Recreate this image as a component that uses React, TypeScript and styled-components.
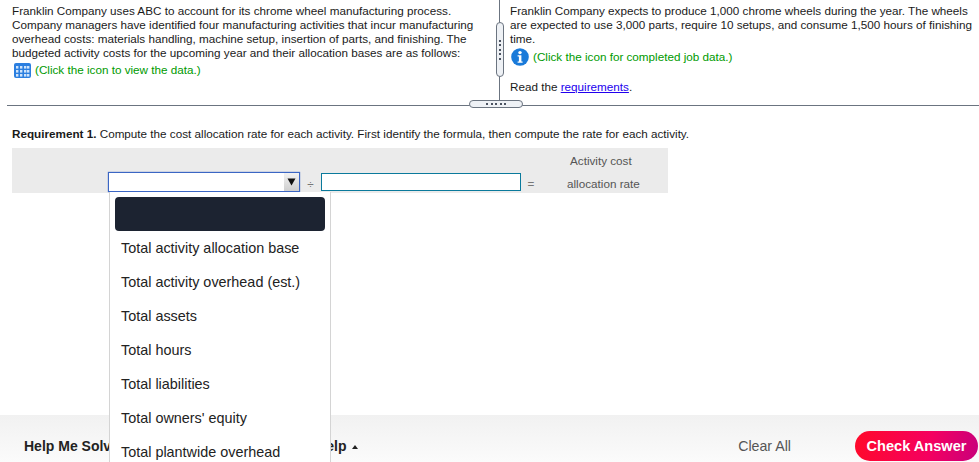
import React from "react";
import styled, { createGlobalStyle } from "styled-components";

const Global = createGlobalStyle`
  html, body { margin: 0; padding: 0; background: #fff; overflow: hidden; }
  body { font-family: "Liberation Sans", Arial, sans-serif; }
`;

const Page = styled.div`
  position: relative;
  width: 979px;
  height: 462px;
  overflow: hidden;
  display: flex;
  flex-direction: column;
  color: #1a1a1a;
  font-size: 11.7px;
  line-height: 14px;
`;

const TopPanes = styled.div`
  position: relative;
  display: flex;
  height: 105px;
  margin-left: 7px;
  border-bottom: 1px solid #6b7480;
  flex: none;
`;

const LeftPane = styled.div`
  width: 493px;
  flex: none;
  box-sizing: border-box;
  padding: 4px 0 0 5px;
  border-right: 1px solid #6b7480;
`;

const RightPane = styled.div`
  flex: 1;
  min-width: 0;
  padding: 4px 0 0 10px;
`;

const Para = styled.p`
  margin: 0;
  white-space: nowrap;
`;

const IconLine = styled.div<{ $top: number; $gap: number; $indent: number }>`
  display: flex;
  align-items: center;
  gap: ${(p) => p.$gap}px;
  margin-top: ${(p) => p.$top}px;
  margin-left: ${(p) => p.$indent}px;
  height: 18px;
  color: #009a00;
  white-space: nowrap;
`;

const ReadLine = styled.p`
  margin: 14px 0 0;
`;

const Link = styled.a`
  color: #2200ee;
  text-decoration: underline;
`;

const VHandle = styled.div`
  position: absolute;
  left: 489px;
  top: 22px;
  width: 6px;
  height: 53px;
  background: #eef1f5;
  border: 1px solid #6b7480;
  border-radius: 4px;
  display: flex;
  flex-direction: column;
  align-items: center;
  justify-content: center;
  gap: 2.5px;
`;

const HHandle = styled.div`
  position: absolute;
  left: 462px;
  top: 100px;
  width: 52px;
  height: 6px;
  background: #eef1f5;
  border: 1px solid #6b7480;
  border-radius: 4px;
  display: flex;
  align-items: center;
  justify-content: center;
  gap: 2.5px;
`;

const Dot = styled.span`
  width: 2px;
  height: 2px;
  background: #4a5260;
`;

const Requirement = styled.p`
  margin: 21px 0 0 12px;
  white-space: nowrap;
`;

const Band = styled.div`
  margin: 7px 0 0 12px;
  width: 656px;
  height: 45px;
  background: #ebebeb;
  display: flex;
  flex-direction: column;
  color: #555;
`;

const BandTop = styled.div`
  height: 24px;
  padding: 6px 0 0 558px;
  box-sizing: border-box;
`;

const Formula = styled.div`
  display: flex;
  align-items: center;
  height: 20px;
  padding-left: 96px;
`;

const SelectBox = styled.div`
  width: 190px;
  height: 18px;
  background: #fff;
  border: 1px solid #3b66c4;
  box-shadow: 0 0 1px #3b66c4;
  display: flex;
  justify-content: flex-end;
  flex: none;
`;

const Arrow = styled.div`
  width: 15px;
  background: linear-gradient(#f2f2f2, #cfcfcf);
  display: flex;
  align-items: center;
  justify-content: center;
`;

const Op = styled.span<{ $w: number }>`
  width: ${(p) => p.$w}px;
  padding-top: 4px;
  text-align: center;
  color: #777;
  flex: none;
`;

const TextBox = styled.div`
  width: 198px;
  height: 16px;
  background: #fff;
  border: 1px solid #0a7a9c;
  flex: none;
`;

const Result = styled.span`
  margin-left: 26px;
  padding-top: 4px;
  white-space: nowrap;
`;

const Spacer = styled.div`
  flex: 1;
`;

const Footer = styled.div`
  flex: none;
  height: 47px;
  box-sizing: border-box;
  background: linear-gradient(#f1f1f1, #fbfbfb);
  display: flex;
  align-items: center;
  padding: 15px 1px 0 24px;
  font-size: 14px;
  line-height: 16px;
`;

const FooterLinks = styled.div`
  display: flex;
  gap: 100px;
  align-items: center;
  font-weight: 700;
  color: #222;
  white-space: nowrap;
`;

const Caret = styled.span`
  display: inline-block;
  margin-left: 5px;
  vertical-align: middle;
  border-left: 3.5px solid transparent;
  border-right: 3.5px solid transparent;
  border-bottom: 4px solid #222;
`;

const ClearAll = styled.span`
  margin-left: auto;
  margin-right: 64px;
  color: #555;
  font-size: 14.2px;
`;

const CheckButton = styled.button`
  width: 123px;
  height: 30px;
  border: 0;
  padding: 0;
  border-radius: 15px;
  background: linear-gradient(100deg, #ff0a2a 0%, #f5005f 60%, #c8007c 100%);
  color: #fff;
  font: 700 14.6px/16px "Liberation Sans", Arial, sans-serif;
`;

const Menu = styled.div`
  position: absolute;
  left: 109px;
  top: 192px;
  width: 210px;
  height: 280px;
  background: #fff;
  border: 1px solid #d4d4d4;
  border-top: 0;
  padding: 5px 5px 0;
`;

const MenuHighlight = styled.div`
  width: 210px;
  height: 34px;
  border-radius: 4px;
  background: #1c2331;
`;

const MenuItem = styled.div`
  height: 34px;
  padding-left: 6px;
  display: flex;
  align-items: center;
  font-size: 14.4px;
  color: #222;
  white-space: nowrap;
`;

const items = [
  "Total activity allocation base",
  "Total activity overhead (est.)",
  "Total assets",
  "Total hours",
  "Total liabilities",
  "Total owners' equity",
  "Total plantwide overhead",
];

const GridIcon = () => (
  <svg width="17" height="15" viewBox="0 0 17 15">
    <rect x="0" y="0" width="17" height="15" rx="2" fill="#2b7fe0" />
    <g fill="#cfe4fb">
      {[3, 7, 11].map((y) =>
        [2, 6, 10, 13].map((x) => <rect key={`${x}-${y}`} x={x} y={y} width="2.4" height="2.6" />)
      )}
    </g>
  </svg>
);

const InfoIcon = () => (
  <svg width="18" height="18" viewBox="0 0 18 18">
    <circle cx="9" cy="9" r="8.8" fill="#1a7ad9" />
    <circle cx="9" cy="4.6" r="1.7" fill="#fff" />
    <path d="M6.6 7.2h3.8v6.2h1.2v1.4H6.6v-1.4h1.3V8.6H6.6z" fill="#fff" />
  </svg>
);

const ArrowGlyph = () => (
  <svg width="9" height="8" viewBox="0 0 9 8">
    <path d="M0.5 0.5h8L4.5 7.5z" fill="#111" />
  </svg>
);

export default function App() {
  return (
    <Page>
      <Global />
      <TopPanes>
        <LeftPane>
          <Para>Franklin Company uses ABC to account for its chrome wheel manufacturing process.</Para>
          <Para>Company managers have identified four manufacturing activities that incur manufacturing</Para>
          <Para>overhead costs: materials handling, machine setup, insertion of parts, and finishing. The</Para>
          <Para>budgeted activity costs for the upcoming year and their allocation bases are as follows:</Para>
          <IconLine $top={1} $gap={4} $indent={2}>
            <GridIcon />
            (Click the icon to view the data.)
          </IconLine>
        </LeftPane>
        <RightPane>
          <Para>Franklin Company expects to produce 1,000 chrome wheels during the year. The wheels</Para>
          <Para>are expected to use 3,000 parts, require 10 setups, and consume 1,500 hours of finishing</Para>
          <Para>time.</Para>
          <IconLine $top={2} $gap={4} $indent={1}>
            <InfoIcon />
            (Click the icon for completed job data.)
          </IconLine>
          <ReadLine>
            Read the <Link href="#">requirements</Link>.
          </ReadLine>
        </RightPane>
        <VHandle>
          {[0, 1, 2, 3, 4].map((i) => <Dot key={i} />)}
        </VHandle>
        <HHandle>
          {[0, 1, 2, 3, 4].map((i) => <Dot key={i} />)}
        </HHandle>
      </TopPanes>
      <Requirement>
        <b>Requirement 1.</b> Compute the cost allocation rate for each activity. First identify the formula, then compute the rate for each activity.
      </Requirement>
      <Band>
        <BandTop>Activity cost</BandTop>
        <Formula>
          <SelectBox>
            <Arrow><ArrowGlyph /></Arrow>
          </SelectBox>
          <Op $w={21}>÷</Op>
          <TextBox />
          <Op $w={20}>=</Op>
          <Result>allocation rate</Result>
        </Formula>
      </Band>
      <Spacer />
      <Footer>
        <FooterLinks>
          <span>Help Me Solve This</span>
          <span>Get More Help<Caret /></span>
        </FooterLinks>
        <ClearAll>Clear All</ClearAll>
        <CheckButton>Check Answer</CheckButton>
      </Footer>
      <Menu>
        <MenuHighlight />
        {items.map((t) => <MenuItem key={t}>{t}</MenuItem>)}
      </Menu>
    </Page>
  );
}
